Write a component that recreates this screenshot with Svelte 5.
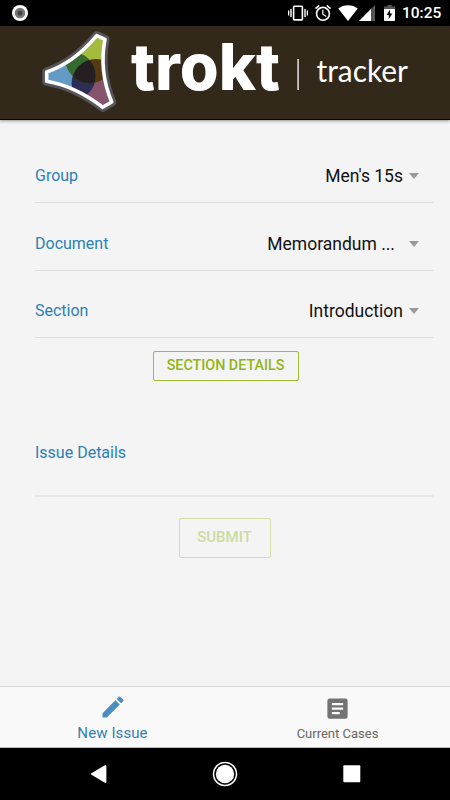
<script>
    const fields = [
        { label: 'Group', value: "Men's 15s" },
        { label: 'Document', value: 'Memorandum ...', cut: true },
        { label: 'Section', value: 'Introduction' }
    ];
    const shield = 'M96.7 35.7L105 39.3Q98.8 71 111.7 102L102.7 107.3Q75 86 46.7 81.3V72Q74 63 96.7 35.7z';
    let issue = $state('');
</script>

<div class="phone">
    <div class="status">
        <svg class="record" width="16" height="16" viewBox="0 0 16 16">
            <circle cx="8" cy="8" r="8" fill="#fff" />
            <circle cx="8" cy="8" r="5.3" fill="#777" />
            <circle cx="8" cy="8" r="2.6" fill="#444" />
        </svg>
        <div class="status-icons">
            <svg class="vibrate" width="20" height="16" viewBox="0 0 20 16">
                <path d="M0 5.5h1.3v5H0zM2.3 4h1.4v8H2.3zM16.3 4h1.4v8h-1.4zM18.7 5.5H20v5h-1.3z" fill="#fff" />
                <rect x="5.6" y="1.3" width="8.8" height="13.6" rx=".8" fill="none" stroke="#fff" stroke-width="1.6" />
            </svg>
            <svg class="alarm" width="16" height="16" viewBox="2 2 20 20">
                <path fill="#fff" d="M22 5.72l-4.6-3.86-1.29 1.53 4.6 3.86L22 5.72zM7.88 3.39L6.6 1.86 2 5.71l1.29 1.53 4.59-3.85zM12.5 8H11v6l4.75 2.85.75-1.23-4-2.37V8zM12 4c-4.97 0-9 4.03-9 9s4.02 9 9 9a9 9 0 0 0 0-18zm0 16c-3.87 0-7-3.13-7-7s3.13-7 7-7 7 3.13 7 7-3.13 7-7 7z" />
            </svg>
            <svg class="wifi" width="20" height="16" viewBox="0 0 20 16">
                <path fill="#fff" d="M10 16L.2 3.6Q4.4.2 10 .2t9.8 3.4z" />
            </svg>
            <svg class="signal" width="16" height="16" viewBox="0 0 16 16">
                <path fill="#555" d="M0 16L16 0v16z" />
                <path fill="#fff" d="M0 16L12 4V16z" />
            </svg>
            <svg class="battery" width="11" height="16" viewBox="0 0 11 16">
                <path fill="#555" d="M3.4 0h4.2v1.6H11V5H0V1.6h3.4z" />
                <path fill="#fff" d="M0 4h11v11.2a.8.8 0 0 1-.8.8H.8a.8.8 0 0 1-.8-.8z" />
                <path fill="#000" d="M6 4.6L2.6 10h2.2v4l3.6-5.6H6z" />
            </svg>
            <span class="clock">10:25</span>
        </div>
    </div>

    <header>
        <svg width="450" height="94" viewBox="0 26 450 94">
            <defs>
                <clipPath id="shield"><path d={shield} /></clipPath>
                <clipPath id="left"><circle cx="71.7" cy="76" r="24" /></clipPath>
                <clipPath id="low"><circle cx="96" cy="83.3" r="24.3" /></clipPath>
            </defs>
            <path class="rim" d={shield} />
            <g clip-path="url(#shield)">
                <circle cx="71.7" cy="76" r="26" fill="#649bc6" />
                <circle cx="96" cy="83.3" r="24.3" fill="#86546f" />
                <circle cx="90" cy="58.3" r="25" fill="#a4bb3d" />
                <circle cx="96" cy="83.3" r="24.3" fill="#2c2e55" clip-path="url(#left)" />
                <circle cx="90" cy="58.3" r="25" fill="#553a13" clip-path="url(#low)" />
                <circle cx="90" cy="58.3" r="25" fill="#376a30" clip-path="url(#left)" />
                <g clip-path="url(#low)">
                    <circle cx="90" cy="58.3" r="25" fill="#251f22" clip-path="url(#left)" />
                </g>
            </g>
            <path class="edge" d={shield} />
            <text class="brand" x="131" y="89.5" textLength="149" lengthAdjust="spacingAndGlyphs">trokt</text>
            <rect x="297.3" y="59" width="1.6" height="31" fill="#ddd6d6" />
            <text class="product" x="316.5" y="81.8" textLength="91.5" lengthAdjust="spacingAndGlyphs">tracker</text>
        </svg>
    </header>

    <main>
        {#each fields as field}
            <div class="row">
                <span class="label">{field.label}</span>
                <span class="value" class:cut={field.cut}>{field.value}</span>
                <span class="caret"></span>
            </div>
        {/each}
        <button class="details">SECTION DETAILS</button>
        <div class="row issue">
            <span class="label">Issue Details</span>
        </div>
        <button class="submit" disabled={!issue}>SUBMIT</button>
    </main>

    <nav class="tabs">
        <div class="tab active">
            <svg width="28" height="28" viewBox="0 0 24 24">
                <path fill="#4a8fc0" d="M3 17.25V21h3.75L17.81 9.94l-3.75-3.75L3 17.25zM20.71 7.04a1 1 0 0 0 0-1.41l-2.34-2.34a1 1 0 0 0-1.41 0l-1.83 1.83 3.75 3.75 1.83-1.83z" />
            </svg>
            <span>New Issue</span>
        </div>
        <div class="tab">
            <svg width="27" height="27" viewBox="0 0 24 24">
                <path fill="#737373" d="M19 3H5a2 2 0 0 0-2 2v14a2 2 0 0 0 2 2h14a2 2 0 0 0 2-2V5a2 2 0 0 0-2-2zm-5 14H7v-2h7v2zm3-4H7v-2h10v2zm0-4H7V7h10v2z" />
            </svg>
            <span>Current Cases</span>
        </div>
    </nav>

    <div class="android">
        <svg width="26" height="26" viewBox="0 0 26 26">
            <path fill="#fff" stroke="#fff" stroke-width="2" stroke-linejoin="round" d="M7 13L20.4 5v16z" />
        </svg>
        <svg width="26" height="26" viewBox="0 0 26 26">
            <circle cx="13" cy="13" r="11.5" fill="none" stroke="#fff" stroke-width="1.5" />
            <circle cx="13" cy="13" r="9.2" fill="#fff" />
        </svg>
        <svg width="26" height="26" viewBox="0 0 26 26">
            <rect x="4.3" y="4.3" width="17" height="17" rx="1" fill="#fff" />
        </svg>
    </div>
</div>

<style>
    :global(body) {
        margin: 0;
    }

    .phone {
        width: 450px;
        height: 800px;
        display: flex;
        flex-direction: column;
        background: #f4f4f4;
        font-family: Roboto, sans-serif;
        overflow: hidden;
    }

    .status {
        height: 26px;
        flex: none;
        box-sizing: border-box;
        padding: 0 9px 0 12px;
        display: flex;
        align-items: center;
        justify-content: space-between;
        background: #000;
    }

    .status-icons {
        display: flex;
        align-items: center;
    }

    .alarm { margin-left: 7px; }
    .wifi { margin-left: 7px; }
    .signal { margin-left: 1px; }
    .battery { margin-left: 9px; }

    .clock {
        margin-left: 7px;
        width: 39px;
        color: #fff;
        font-size: 15.5px;
        font-weight: 500;
        line-height: 28px;
        white-space: nowrap;
    }

    header {
        height: 94px;
        flex: none;
        background: #33291b;
        border-bottom: 1px solid #080603;
        box-sizing: border-box;
        box-shadow: 0 1px 3px rgba(0, 0, 0, 0.4);
    }

    header svg {
        display: block;
    }

    .rim {
        fill: none;
        stroke: #55555a;
        stroke-width: 9;
        stroke-linejoin: round;
    }

    .edge {
        fill: none;
        stroke: #fff;
        stroke-width: 3.6;
        stroke-linejoin: round;
    }

    .brand {
        font-family: Inter, sans-serif;
        font-size: 65px;
        font-weight: 800;
        fill: #fff;
    }

    .product {
        font-family: Lato, sans-serif;
        font-size: 30px;
        fill: #fff;
    }

    main {
        flex: 1;
        display: flex;
        flex-direction: column;
        align-items: center;
        padding: 15px 17px 0 35px;
    }

    .row {
        width: 100%;
        height: 68px;
        flex: none;
        box-sizing: border-box;
        padding: 14px 14px 0 0;
        display: flex;
        align-items: center;
        border-bottom: 1px solid #dcdcdc;
    }

    .row:nth-child(3) {
        height: 67px;
        padding-top: 13px;
    }

    .label {
        color: #2c80b4;
        font-size: 16px;
    }

    .value {
        margin-left: auto;
        color: #111;
        font-size: 17.5px;
    }

    .cut {
        margin-right: 8px;
    }

    .caret {
        margin-left: 6px;
        border: 5.5px solid transparent;
        border-top: 6px solid #999;
        border-bottom: 0;
    }

    button {
        flex: none;
        background: none;
        border: 1px solid #9fbd2e;
        border-radius: 2px;
        padding: 0 0 2px;
        color: #93b51c;
        font-family: inherit;
        font-weight: 500;
    }

    .details {
        margin: 13px 0 0 -17px;
        width: 146px;
        height: 30px;
        font-size: 14.3px;
    }

    .issue {
        margin-top: 42px;
        height: 74px;
        padding: 0 0 13px;
        border-bottom: 2px solid #e5e5e5;
    }

    .submit {
        margin: 21px 0 0 -19px;
        width: 92px;
        height: 40px;
        font-size: 15px;
        opacity: 0.4;
    }

    .tabs {
        height: 62px;
        flex: none;
        box-sizing: border-box;
        display: flex;
        background: #f9f9f9;
        border-top: 1px solid #dadada;
        border-bottom: 1px solid #bbb;
    }

    .tab {
        flex: 1;
        display: flex;
        flex-direction: column;
        align-items: center;
        padding-top: 8px;
        color: #666;
        font-size: 13px;
    }

    .tab span {
        margin-top: 4px;
    }

    .active {
        padding-top: 6px;
        color: #3080b5;
        font-size: 15px;
    }

    .active span {
        margin-top: 3px;
        letter-spacing: 0.1px;
    }

    .android {
        height: 52px;
        flex: none;
        box-sizing: border-box;
        padding: 0 85px;
        display: flex;
        align-items: center;
        justify-content: space-between;
        background: #000;
    }
</style>
